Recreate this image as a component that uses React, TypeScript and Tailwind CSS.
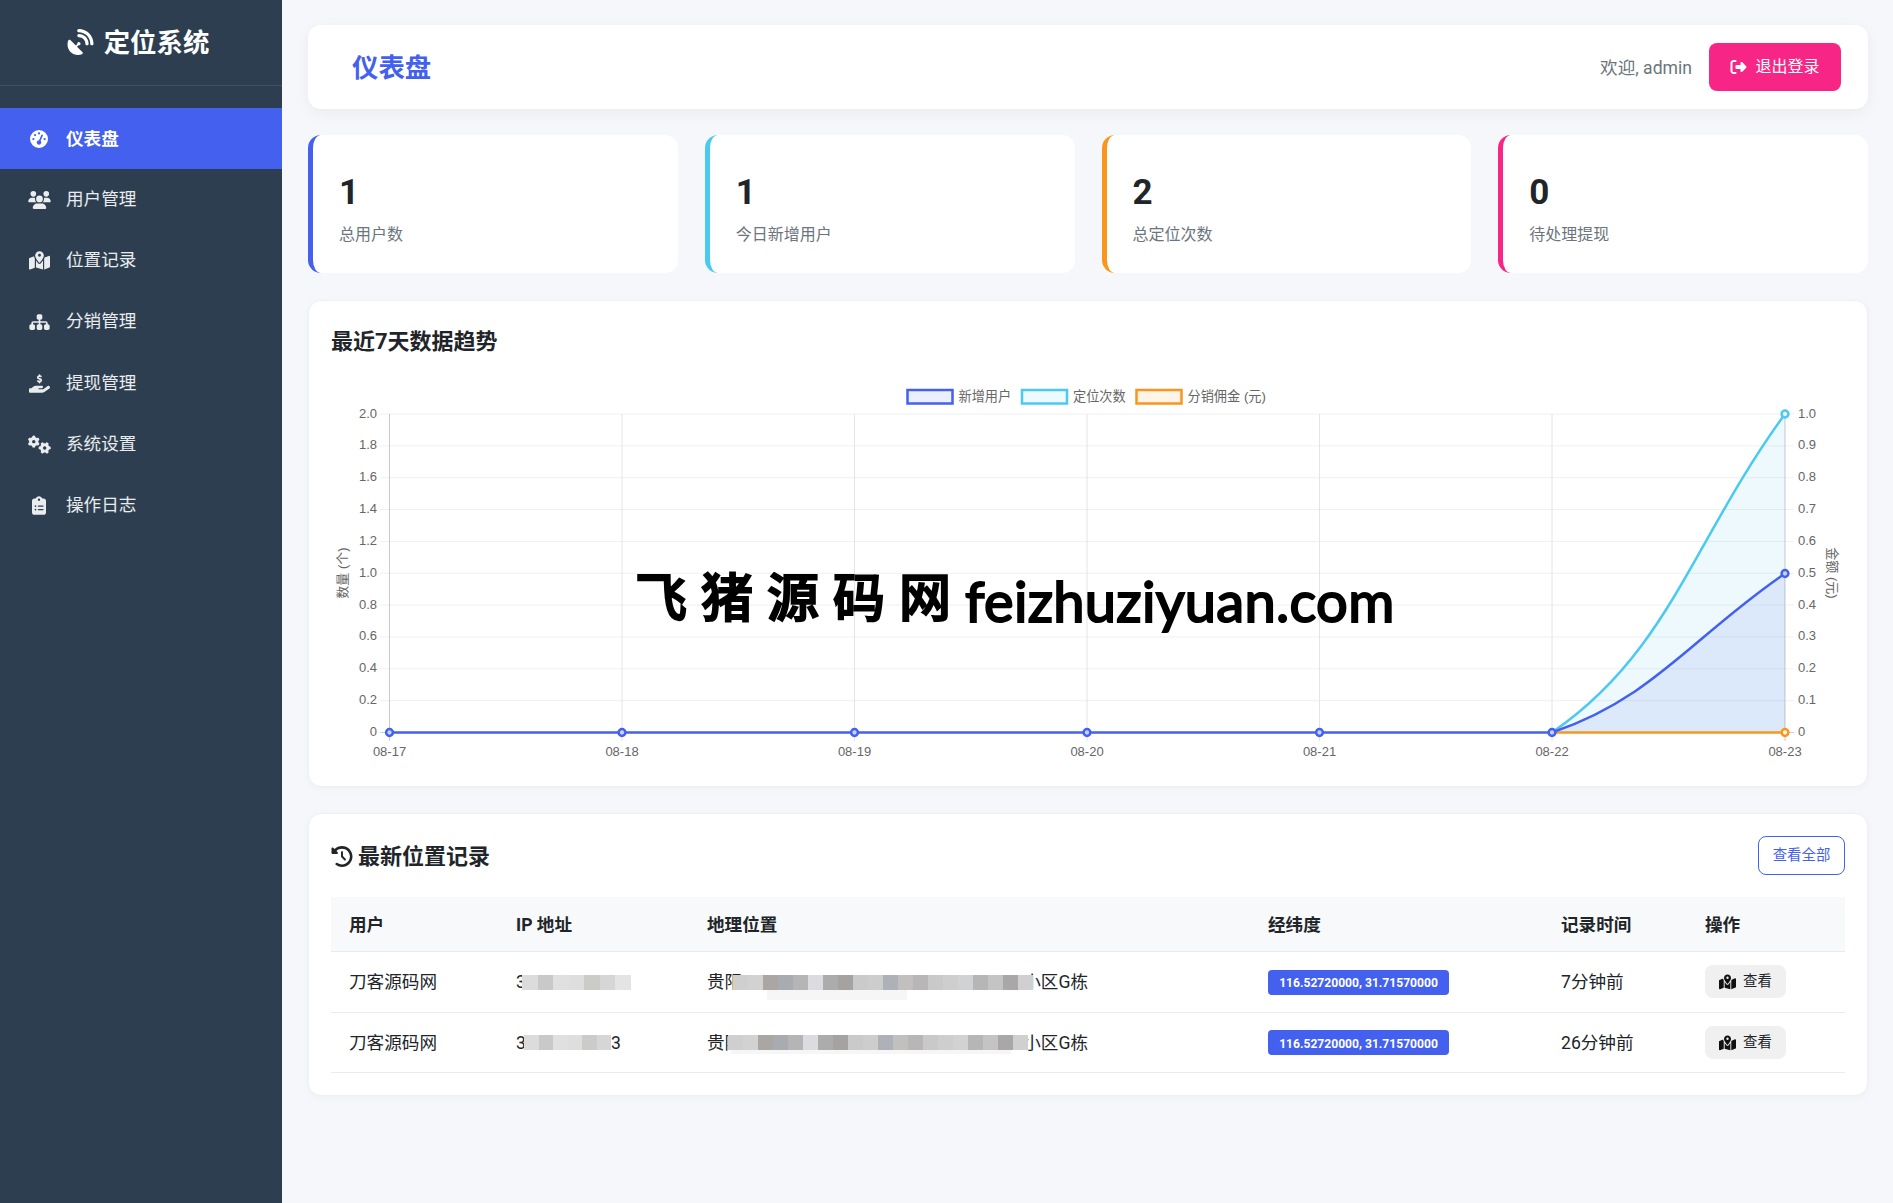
import React from 'react';
import {
  FaSatelliteDish,
  FaGaugeHigh,
  FaUsers,
  FaMapLocationDot,
  FaSitemap,
  FaHandHoldingDollar,
  FaGears,
  FaClipboardList,
  FaRightFromBracket,
  FaClockRotateLeft,
} from 'react-icons/fa6';

const navItems = [
  { label: '仪表盘', icon: FaGaugeHigh, size: 'w-[18px] h-[18px]', active: true },
  { label: '用户管理', icon: FaUsers, size: 'w-[23px] h-[18px]' },
  { label: '位置记录', icon: FaMapLocationDot, size: 'w-[21px] h-[19px]' },
  { label: '分销管理', icon: FaSitemap, size: 'w-[21px] h-[18px]' },
  { label: '提现管理', icon: FaHandHoldingDollar, size: 'w-[21px] h-[19px]' },
  { label: '系统设置', icon: FaGears, size: 'w-[23px] h-[19px]' },
  { label: '操作日志', icon: FaClipboardList, size: 'w-[14px] h-[19px]' },
];

const stats = [
  { value: '1', label: '总用户数', border: 'border-l-[#4361ee]' },
  { value: '1', label: '今日新增用户', border: 'border-l-[#4cc9f0]' },
  { value: '2', label: '总定位次数', border: 'border-l-[#f8961e]' },
  { value: '0', label: '待处理提现', border: 'border-l-[#f72585]' },
];

const gridXs = [389.5, 622, 854.5, 1087, 1319.5, 1552, 1785];
const dates = ['08-17', '08-18', '08-19', '08-20', '08-21', '08-22', '08-23'];
const leftTicks = ['2.0', '1.8', '1.6', '1.4', '1.2', '1.0', '0.8', '0.6', '0.4', '0.2', '0'];
const rightTicks = ['1.0', '0.9', '0.8', '0.7', '0.6', '0.5', '0.4', '0.3', '0.2', '0.1', '0'];
const TOP = 415;
const BOTTOM = 733.5;
const STEP = (BOTTOM - TOP) / 10;

const legend = [
  { x: 907.5, textX: 958.5, label: '新增用户', stroke: '#4361ee', fill: '#ecefFD' },
  { x: 1022, textX: 1073, label: '定位次数', stroke: '#4cc9f0', fill: '#edfafe' },
  { x: 1136.5, textX: 1187.5, label: '分销佣金 (元)', stroke: '#f8961e', fill: '#fef4e8' },
];

function TrendChart() {
  return (
    <svg width="1514" height="390" viewBox="331 380 1514 390" className="block" fontFamily='"Liberation Sans", "Noto Sans CJK SC", sans-serif'>
      {legend.map((l) => (
        <g key={l.label}>
          <rect x={l.x} y={391} width={45} height={13.5} fill={l.fill} stroke={l.stroke} strokeWidth="2.5" />
          <text x={l.textX} y={401.5} fontSize="13.2" fill="#666">{l.label}</text>
        </g>
      ))}

      {leftTicks.map((t, i) => {
        const y = TOP + i * STEP;
        return (
          <g key={i}>
            <line x1={380} x2={1794} y1={y} y2={y} stroke={i === 10 ? '#d0d0d0' : '#f0f0f0'} />
            <text x={377} y={y + 3.5} fontSize="13" fill="#666" textAnchor="end">{t}</text>
            <text x={1798} y={y + 3.5} fontSize="13" fill="#666">{rightTicks[i]}</text>
          </g>
        );
      })}

      {gridXs.map((x, i) => (
        <g key={x}>
          <line x1={x} x2={x} y1={TOP} y2={742} stroke={i === 0 || i === 6 ? '#c9c9c9' : '#e4e4e4'} />
          <text x={x} y={756.5} fontSize="13" fill="#666" textAnchor="middle">{dates[i]}</text>
        </g>
      ))}

      <text transform="translate(347 574) rotate(-90)" fontSize="13" fill="#666" textAnchor="middle">数量 (个)</text>
      <text transform="translate(1828 574) rotate(90)" fontSize="13" fill="#666" textAnchor="middle">金额 (元)</text>

      <path d="M1552 733.5 C1669 653.4 1692 542.4 1785 415 L1785 733.5 Z" fill="#4cc9f0" fillOpacity="0.1" />
      <path d="M1552 733.5 C1654 698.7 1692 638 1785 574.5 L1785 733.5 Z" fill="#4361ee" fillOpacity="0.1" />

      <path d="M1552 733.5 L1785 733.5" stroke="#f8961e" strokeWidth="2.5" fill="none" />
      <path d="M1552 733.5 C1669 653.4 1692 542.4 1785 415" stroke="#4cc9f0" strokeWidth="2.5" fill="none" />
      <path d="M389.5 733.5 L1552 733.5 C1654 698.7 1692 638 1785 574.5" stroke="#4361ee" strokeWidth="2.5" fill="none" />

      <circle cx={1785} cy={415} r={3.4} fill="#edfafe" stroke="#4cc9f0" strokeWidth="2.5" />
      <circle cx={1785} cy={733.5} r={3.4} fill="#fef4e8" stroke="#f8961e" strokeWidth="2.5" />
      {gridXs.slice(0, 6).map((x) => (
        <circle key={x} cx={x} cy={733.5} r={3.4} fill="#c9d2fa" stroke="#4361ee" strokeWidth="2.5" />
      ))}
      <circle cx={1785} cy={574.5} r={3.4} fill="#c9d2fa" stroke="#4361ee" strokeWidth="2.5" />
    </svg>
  );
}

const addressBlocks = [
  'bg-[#cfcfcf]', 'bg-[#d2d2d2]', 'bg-[#a9a6a4]', 'bg-[#a8abb0]', 'bg-[#b5b5b5]',
  'bg-[#dcdce0]', 'bg-[#acacac]', 'bg-[#a5a3a1]', 'bg-[#cacaca]', 'bg-[#cdcdcd]',
  'bg-[#aeb1b8]', 'bg-[#c2bfbf]', 'bg-[#b8b6b6]', 'bg-[#c9c9c9]', 'bg-[#cecece]',
  'bg-[#d1d2d3]', 'bg-[#b6b6b6]', 'bg-[#c4c4c4]', 'bg-[#a9a7a7]', 'bg-[#d0d0d0]',
];
const ipBlocks = [
  'bg-[#dcdcdc]', 'bg-[#c9c9c9]', 'bg-[#e0e0e0]', 'bg-[#dedede]', 'bg-[#cbcbc9]', 'bg-[#d6d6d6]', 'bg-[#e4e4e4]',
];

function Mosaic({ blocks, className, blockWidth = 'w-[15px]' }: { blocks: string[]; className: string; blockWidth?: string }) {
  return (
    <div className={`absolute flex h-[15px] ${className}`}>
      {blocks.map((b, i) => (
        <div key={i} className={`h-full ${blockWidth} ${b}`}></div>
      ))}
    </div>
  );
}

const rows = [
  {
    time: '7分钟前',
    height: 'h-[61px]',
    ipEnd: '',
    ipMosaic: 'left-[6px] top-[6px]',
    ipCount: 7,
    ipBlock: 'w-[15.5px]',
    addrMosaic: 'left-[26px] top-[6px]',
    smudge: 'left-[60px] top-[21px] w-[140px] h-[10px]',
  },
  {
    time: '26分钟前',
    height: 'h-[60px]',
    ipEnd: '3',
    ipMosaic: 'left-[8px] top-[5px]',
    ipCount: 6,
    ipBlock: 'w-[14.5px]',
    addrMosaic: 'left-[21px] top-[5px]',
    smudge: 'left-[24px] top-[20px] w-[280px] h-[4px]',
  },
];

function RecordsTable() {
  return (
    <table className="w-full table-fixed border-collapse text-[17.6px] text-[#212529]">
      <thead>
        <tr className="bg-[#f8f9fa] h-[54px] border-b border-[#e9ecef] text-left">
          <th className="w-[167px] pt-[2px] pl-[18px] font-bold">用户</th>
          <th className="w-[191px] pt-[2px] pl-[18px] font-bold">IP 地址</th>
          <th className="w-[561px] pt-[2px] pl-[18px] font-bold">地理位置</th>
          <th className="w-[293px] pt-[2px] pl-[18px] font-bold">经纬度</th>
          <th className="w-[144px] pt-[2px] pl-[18px] font-bold">记录时间</th>
          <th className="pt-[2px] pl-[18px] font-bold">操作</th>
        </tr>
      </thead>
      <tbody>
        {rows.map((row) => (
          <tr key={row.time} className={`border-b border-[#e9ecef] ${row.height}`}>
            <td className="pt-[2px] pl-[18px]">刀客源码网</td>
            <td className="pt-[2px] pl-[18px]">
              <div className="relative flex w-[105px] justify-between">
                <span>3</span>
                <span>{row.ipEnd}</span>
                <Mosaic blocks={ipBlocks.slice(0, row.ipCount)} className={row.ipMosaic} blockWidth={row.ipBlock} />
              </div>
            </td>
            <td className="pt-[2px] pl-[18px]">
              <div className="relative flex w-[381px] justify-between">
                <span>贵阳</span>
                <span>小区G栋</span>
                <Mosaic blocks={addressBlocks} className={row.addrMosaic} />
                <div className={`absolute bg-[#f6f6f6] ${row.smudge}`}></div>
              </div>
            </td>
            <td className="pl-[18px]">
              <span className="inline-flex h-[25px] w-[181px] items-center justify-center rounded bg-[#4361ee] pt-[2px] text-[12.1px] font-bold text-white">
                116.52720000, 31.71570000
              </span>
            </td>
            <td className="pt-[2px] pl-[18px]">{row.time}</td>
            <td className="pl-[18px]">
              <button className="flex h-[33px] w-[81px] items-center justify-center gap-[7px] rounded-lg bg-[#f0f0f0] pt-[1px] text-[14.4px] text-[#212529]">
                <FaMapLocationDot className="h-[16px] w-[17px] text-[#111]" />
                查看
              </button>
            </td>
          </tr>
        ))}
      </tbody>
    </table>
  );
}

export default function App() {
  return (
    <div className="flex min-h-[1203px] bg-[#f5f7fb] font-['Roboto','Noto_Sans_CJK_SC',sans-serif]">
      <aside className="w-[282px] shrink-0 bg-[#2c3e50] text-white">
        <div className="flex h-[86px] items-center justify-center gap-[10px] border-b border-white/10 pr-[6px] pb-[1px]">
          <FaSatelliteDish className="h-[26px] w-[27px]" />
          <span className="pt-[4px] text-[26.4px] font-bold">定位系统</span>
        </div>
        <nav className="mt-[22px] flex flex-col">
          {navItems.map(({ label, icon: Icon, size, active }) => (
            <div
              key={label}
              className={`flex h-[61.2px] items-center pl-[27px] text-[17.6px] ${
                active ? 'bg-[#4361ee] font-bold text-white' : 'text-white/90'
              }`}
            >
              <span className="flex w-[24px] justify-center">
                <Icon className={size} />
              </span>
              <span className={`ml-[15px] ${active ? 'pt-[2px]' : 'pb-[1px]'}`}>{label}</span>
            </div>
          ))}
        </nav>
      </aside>

      <main className="flex min-w-0 flex-1 flex-col pt-[25px] pr-[25px] pl-[26px]">
        <header className="flex h-[84px] items-center justify-between rounded-[13px] bg-white pr-[27px] pl-[44px] shadow-[0_4px_15px_rgba(0,0,0,0.05)]">
          <h1 className="pt-[4px] text-[26.4px] font-bold text-[#4361ee]">仪表盘</h1>
          <div className="flex items-center gap-[17px]">
            <span className="pt-[2px] text-[17.6px] text-[#6c757d]">欢迎, admin</span>
            <button className="flex h-[48px] w-[132px] items-center justify-center gap-[8px] rounded-lg bg-[#f72585] text-[16px] text-white">
              <FaRightFromBracket className="h-[16px] w-[17px]" />
              退出登录
            </button>
          </div>
        </header>

        <div className="mt-[26px] grid grid-cols-4 gap-[27px]">
          {stats.map((s) => (
            <div key={s.label} className={`h-[138px] rounded-[13px] border-l-[5px] bg-white pt-[35px] pl-[26px] ${s.border}`}>
              <div className="text-[35px] leading-[46px] font-bold text-[#212529]">{s.value}</div>
              <div className="mt-[7px] text-[16px] text-[#6c757d]">{s.label}</div>
            </div>
          ))}
        </div>

        <section className="relative mt-[27px] h-[487px] rounded-[13px] border border-[#eef0f4] bg-white px-[22px] shadow-[0_2px_8px_rgba(0,0,0,0.03)]">
          <h2 className="pt-[25px] text-[22px] leading-[32px] font-bold text-[#212529]">最近7天数据趋势</h2>
          <div className="mt-[21px]">
            <TrendChart />
          </div>
          <div className="absolute top-[263px] left-[326px] flex items-center text-black [-webkit-text-stroke:2px_black]">
            <span className="text-[52px] leading-[70px] tracking-[14px] font-medium">飞猪源码网</span>
            <span className="pt-[2px] font-['Lato',sans-serif] text-[56px] leading-[70px] tracking-[0.3px] font-normal">feizhuziyuan.com</span>
          </div>
        </section>

        <section className="mt-[26px] mb-[26px] h-[283px] rounded-[13px] border border-[#eef0f4] bg-white px-[22px] shadow-[0_2px_8px_rgba(0,0,0,0.03)]">
          <div className="flex h-[83px] items-center justify-between">
            <h2 className="flex items-center gap-[5px] pt-[2px] text-[22px] font-bold text-[#212529]">
              <FaClockRotateLeft className="h-[21px] w-[22px]" />
              最新位置记录
            </h2>
            <button className="h-[39px] w-[87px] rounded-lg border border-[#4361ee] text-[14.4px] text-[#4361ee]">查看全部</button>
          </div>
          <RecordsTable />
        </section>
      </main>
    </div>
  );
}
